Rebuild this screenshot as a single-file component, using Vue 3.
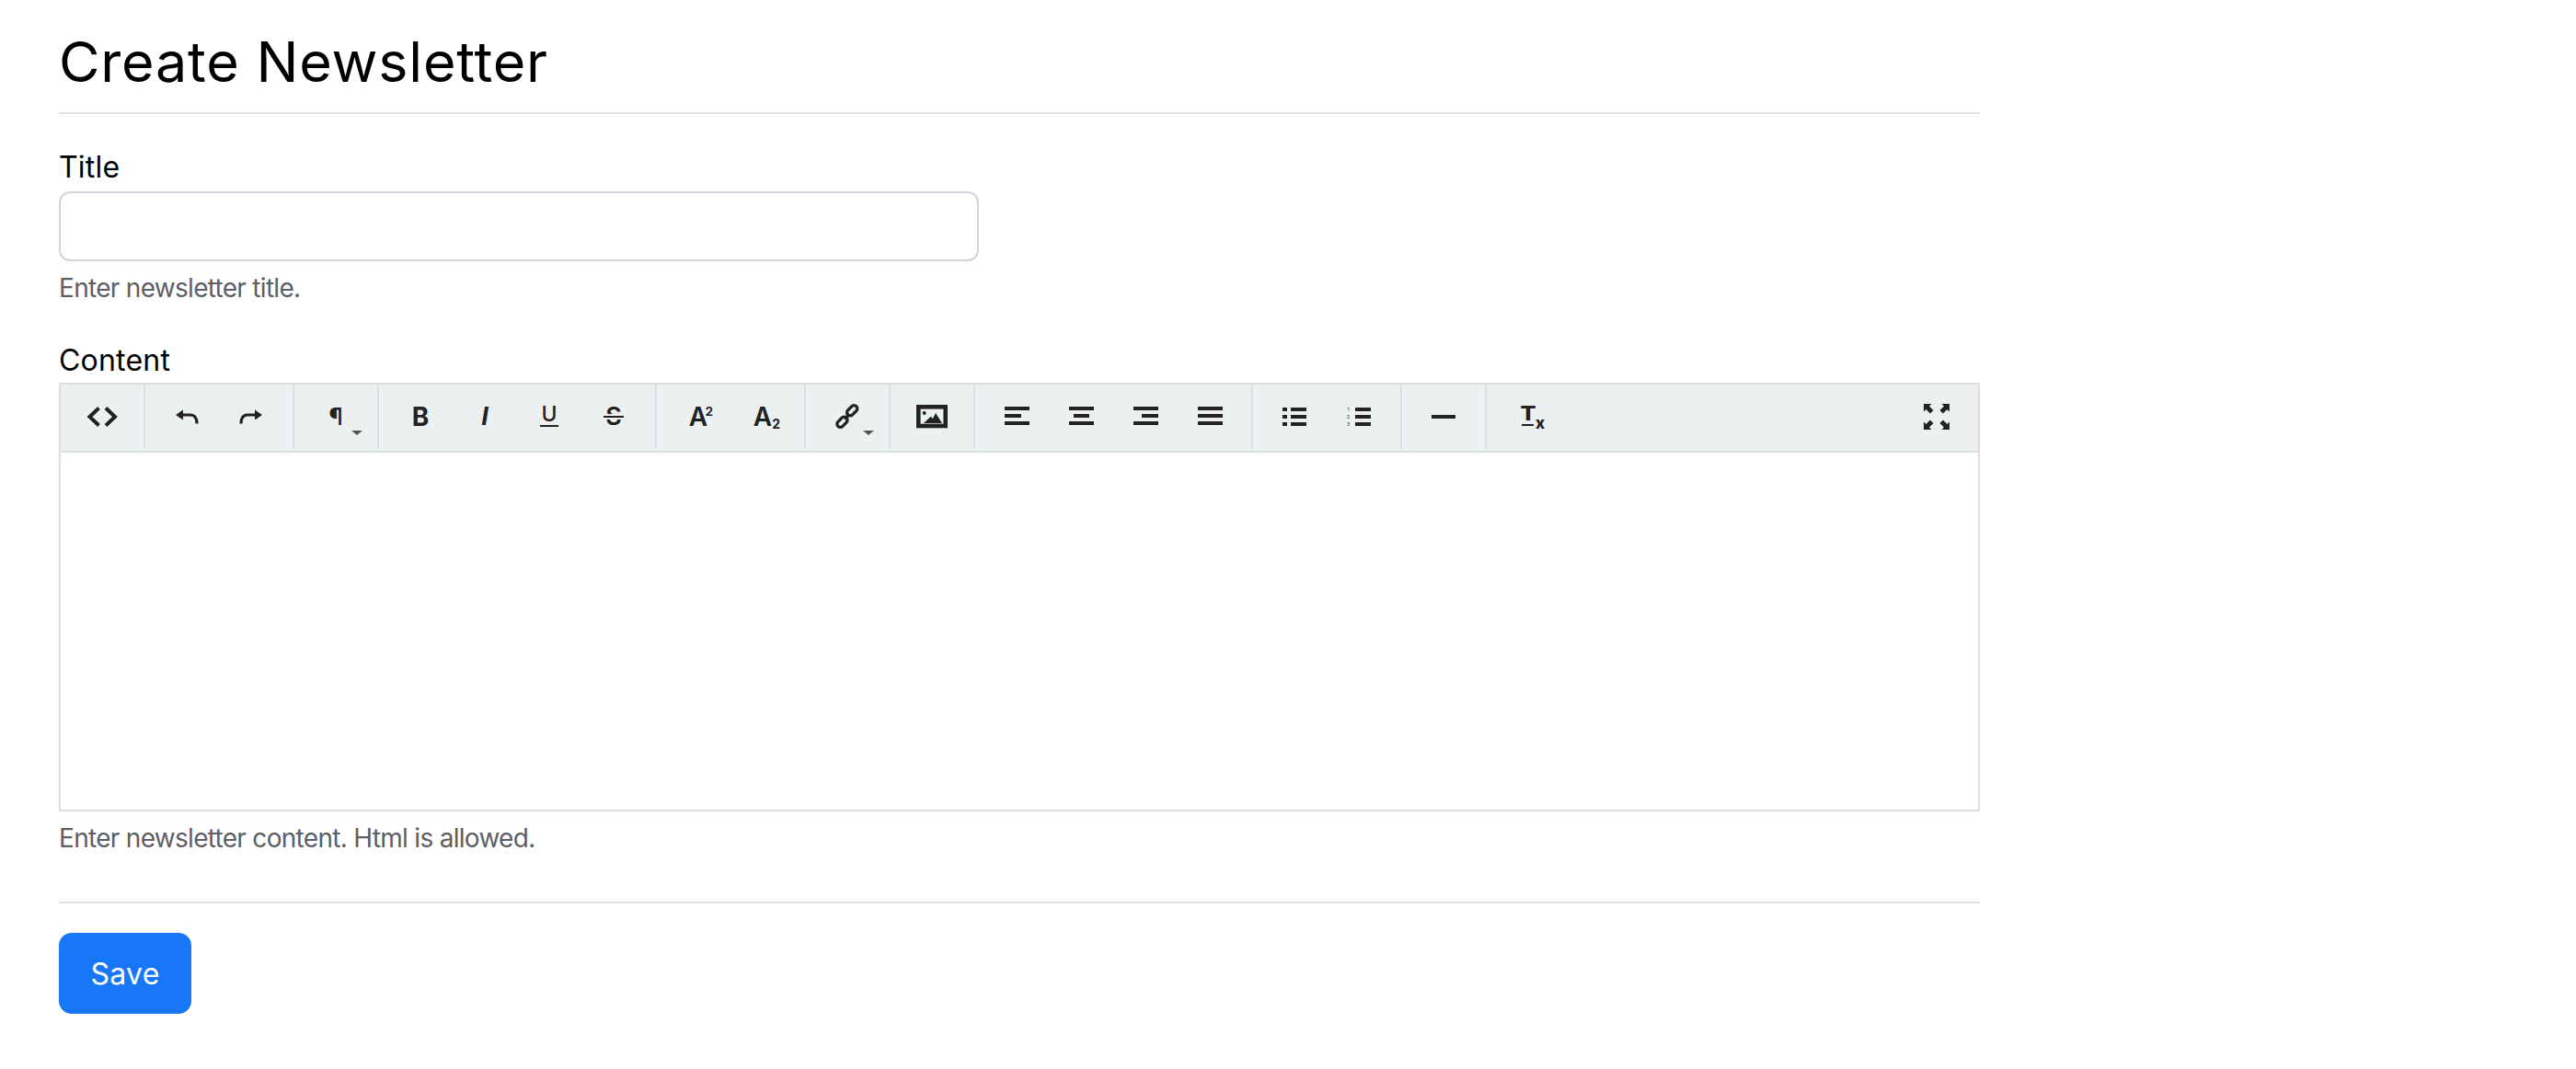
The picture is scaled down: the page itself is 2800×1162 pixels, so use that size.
<script setup>
const groups = [
  ['code'],
  ['undo', 'redo'],
  ['para'],
  ['bold', 'italic', 'underline', 'strike'],
  ['sup', 'sub'],
  ['link'],
  ['image'],
  ['left', 'center', 'right', 'justify'],
  ['ul', 'ol'],
  ['hr'],
  ['clear'],
]
const aligns = {
  left: ['x0 w27', 'x0 w18', 'x0 w27'],
  center: ['x0 w27', 'x5 w17', 'x0 w27'],
  right: ['x0 w27', 'x9 w18', 'x0 w27'],
  justify: ['x0 w27', 'x0 w27', 'x0 w27'],
}
</script>

<template>
  <main class="page">
    <h1 class="heading">Create Newsletter</h1>
    <form class="form" @submit.prevent>
      <label class="label title-label" for="title">Title</label>
      <input id="title" class="input" type="text" />
      <p class="help">Enter newsletter title.</p>

      <label class="label content-label">Content</label>
      <div class="editor">
        <div class="toolbar">
          <div v-for="(g, i) in groups" :key="i" class="group">
            <button v-for="b in g" :key="b" type="button" class="btn">
              <svg v-if="b === 'code'" class="ico" viewBox="0 0 36 36"><path d="M14.500 8.500 L4.500 18 L14.500 27.500 M22 8.500 L32 18 L22 27.500" fill="none" stroke="#222" stroke-width="4"/></svg>
              <svg v-else-if="b === 'undo'" class="ico" viewBox="0 0 36 36"><path d="M6 16 L14 10.500 V21.500 Z" fill="#222"/><path d="M13 16 H22 Q29 16 29 25.500" fill="none" stroke="#222" stroke-width="3.200"/></svg>
              <svg v-else-if="b === 'redo'" class="ico" viewBox="0 0 36 36"><path d="M30 16 L22 10.500 V21.500 Z" fill="#222"/><path d="M23 16 H14 Q7 16 7 25.500" fill="none" stroke="#222" stroke-width="3.200"/></svg>
              <span v-else-if="b === 'para'" class="glyph para">¶</span>
              <span v-else-if="b === 'bold'" class="glyph bold">B</span>
              <span v-else-if="b === 'italic'" class="glyph italic">I</span>
              <span v-else-if="b === 'underline'" class="glyph under">U</span>
              <span v-else-if="b === 'strike'" class="glyph strike">S</span>
              <span v-else-if="b === 'sup'" class="glyph aa">A<small class="sup">2</small></span>
              <span v-else-if="b === 'sub'" class="glyph aa">A<small class="sub">2</small></span>
              <svg v-else-if="b === 'link'" class="ico" viewBox="0 0 36 36"><g fill="none" stroke="#222" stroke-width="3.300"><rect x="16.700" y="7.800" width="13" height="7" rx="3.500" transform="rotate(-45 23.200 11.300)"/><rect x="6" y="20.200" width="13" height="7" rx="3.500" transform="rotate(-45 12.500 23.700)"/><path d="M15 20.500 L20.500 15"/></g></svg>
              <svg v-else-if="b === 'image'" class="ico" viewBox="0 0 36 36"><rect x="3.300" y="7.300" width="29.400" height="20.700" fill="none" stroke="#222" stroke-width="4.600"/><circle cx="9.700" cy="14" r="2" fill="#222"/><path d="M9 25 L16.700 17.700 L19 20 L22 14 L29 25 Z" fill="#222"/></svg>
              <span v-else-if="aligns[b]" class="bars">
                <i v-for="(c, n) in aligns[b]" :key="n" :class="c"></i>
              </span>
              <span v-else-if="b === 'ul'" class="list">
                <span v-for="n in 3" :key="n" class="row"><i class="dot"></i><i class="line"></i></span>
              </span>
              <span v-else-if="b === 'ol'" class="list numbered">
                <span v-for="n in 3" :key="n" class="row"><small class="num">{{ n }}</small><i class="line"></i></span>
              </span>
              <i v-else-if="b === 'hr'" class="dash"></i>
              <span v-else-if="b === 'clear'" class="glyph clear"><span class="tee">T</span><small class="x">x</small></span>
              <i v-if="b === 'para' || b === 'link'" class="caret"></i>
            </button>
          </div>
          <div class="group end">
            <button type="button" class="btn">
              <svg class="ico" viewBox="0 0 36 36"><g fill="#222"><path d="M4 4 H12.500 L10 6.500 L14.500 11 L11 14.500 L6.500 10 L4 12.500 Z"/><path d="M32 4 H23.500 L26 6.500 L21.500 11 L25 14.500 L29.500 10 L32 12.500 Z"/><path d="M4 32 H12.500 L10 29.500 L14.500 25 L11 21.500 L6.500 26 L4 23.500 Z"/><path d="M32 32 H23.500 L26 29.500 L21.500 25 L25 21.500 L29.500 26 L32 23.500 Z"/></g></svg>
            </button>
          </div>
        </div>
        <div class="body"></div>
      </div>
      <p class="help help-2">Enter newsletter content. Html is allowed.</p>
      <hr class="rule" />
      <button type="submit" class="save">Save</button>
    </form>
  </main>
</template>

<style scoped>
.page {
  width: 2088px;
  margin-left: 64px;
  font-family: Inter, "Noto Sans", sans-serif;
  color: #000;
}
.heading {
  margin: 0;
  height: 124px;
  box-sizing: border-box;
  padding-top: 32px;
  border-bottom: 2px solid #dee2e6;
  font-size: 61px;
  line-height: 70px;
  font-weight: 400;
  letter-spacing: 0.8px;
}
.label {
  display: block;
  font-size: 32px;
  line-height: 40px;
  letter-spacing: 0.2px;
}
.title-label {
  margin-top: 38px;
  margin-bottom: 6px;
}
.input {
  display: block;
  box-sizing: border-box;
  width: 1000px;
  height: 76px;
  border: 2px solid #ced4da;
  border-radius: 12px;
  background: #fff;
  outline: none;
}
.help {
  margin: 12px 0 0;
  font-size: 28px;
  line-height: 34px;
  letter-spacing: -0.7px;
  color: #5c6064;
}
.content-label {
  margin-top: 42px;
  margin-bottom: 4px;
}
.editor {
  box-sizing: border-box;
  height: 466px;
  border: 2px solid #ddd;
  display: flex;
  flex-direction: column;
}
.toolbar {
  display: flex;
  height: 74px;
  box-sizing: border-box;
  background: #ecf0f1;
  border-bottom: 2px solid #d7e0e2;
}
.group {
  display: flex;
  box-sizing: border-box;
  padding: 0 12px 0 10px;
  height: 72px;
  position: relative;
}
.group::after {
  content: "";
  position: absolute;
  right: 0;
  top: 0;
  bottom: 2px;
  width: 2px;
  background: #d7e0e2;
}
.group:nth-last-child(2)::after,
.group.end::after {
  display: none;
}
.group.end {
  margin-left: auto;
  padding-right: 10px;
}
.btn {
  position: relative;
  width: 70px;
  height: 70px;
  padding: 0;
  border: 0;
  background: none;
  display: flex;
  align-items: center;
  justify-content: center;
  color: #222;
  font-family: Inter, sans-serif;
}
.ico {
  display: block;
  width: 36px;
  height: 36px;
}
.glyph {
  position: relative;
  display: block;
  line-height: 36px;
  height: 36px;
  font-size: 27px;
  color: #222;
}
.bold {
  font-size: 28px;
  font-weight: 700;
}
.italic {
  font-weight: 700;
  font-style: italic;
}
.under {
  box-sizing: content-box;
  width: 20px;
  height: 16px;
  line-height: 16px;
  font-size: 23px;
  font-weight: 500;
  text-align: center;
  padding-bottom: 4px;
  border-bottom: 2px solid #222;
}
.strike {
  font-weight: 600;
  width: 22px;
  text-align: center;
}
.strike::after {
  content: "";
  position: absolute;
  left: 0;
  right: 0;
  top: 17px;
  height: 2px;
  background: #222;
  box-shadow: 0 2px 0 #ecf0f1, 0 -2px 0 #ecf0f1;
}
.para {
  font-weight: 500;
  font-size: 26px;
}
.aa {
  font-weight: 600;
  font-size: 28px;
}
.sup,
.sub {
  position: absolute;
  font-weight: 700;
  line-height: 12px;
}
.sup {
  left: 88%;
  top: 6px;
  font-size: 13px;
}
.sub {
  left: 100%;
  top: 20px;
  font-size: 14px;
}
.bars {
  display: flex;
  flex-direction: column;
  gap: 4px;
  width: 27px;
  margin-bottom: 2px;
}
.bars i {
  display: block;
  height: 4px;
  background: #222;
}
.x0 { margin-left: 0; }
.x5 { margin-left: 5px; }
.x9 { margin-left: 9px; }
.w27 { width: 27px; }
.w18 { width: 18px; }
.w17 { width: 17px; }
.list {
  display: flex;
  flex-direction: column;
  gap: 4px;
}
.row {
  display: flex;
  align-items: center;
  gap: 4px;
  height: 4px;
}
.dot {
  display: block;
  width: 5px;
  height: 4px;
  background: #222;
}
.line {
  display: block;
  width: 17px;
  height: 4px;
  background: #222;
}
.numbered .row {
  gap: 6px;
}
.num {
  font-size: 5px;
  width: 3px;
  line-height: 4px;
  color: #222;
}
.dash {
  display: block;
  width: 26px;
  height: 4px;
  background: #222;
}
.clear {
  font-weight: 800;
  font-size: 21px;
  width: 16px;
}
.tee {
  display: block;
  line-height: 36px;
  text-align: center;
  transform: translateY(-3px) scaleX(1.2);
}
.clear::after {
  content: "";
  position: absolute;
  left: 1px;
  width: 13px;
  top: 26px;
  height: 2px;
  background: #222;
}
.x {
  position: absolute;
  left: 16px;
  top: 16px;
  font-size: 17px;
  line-height: 18px;
  font-weight: 800;
}
.caret {
  position: absolute;
  right: 6px;
  top: 50px;
  border-style: solid;
  border-width: 5px 6px 0;
  border-color: #555 transparent transparent;
}
.body {
  flex: 1;
  background: #fff;
}
.help-2 {
  margin-top: 12px;
}
.rule {
  margin: 52px 0 32px;
  border: 0;
  height: 2px;
  background: #dee2e6;
}
.save {
  display: block;
  width: 144px;
  height: 88px;
  border: 0;
  border-radius: 14px;
  background: #1877f6;
  color: #fff;
  font-family: inherit;
  font-size: 32px;
  letter-spacing: 0.3px;
  padding: 0;
}
</style>
